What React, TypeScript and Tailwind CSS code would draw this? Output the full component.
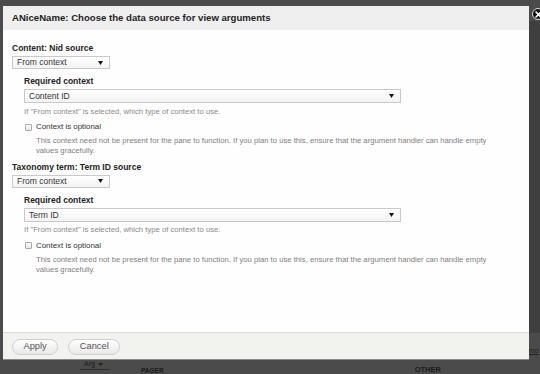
import React from 'react';

function Arrow() {
  return (
    <svg width="5" height="4" viewBox="0 0 5 4" className="shrink-0">
      <polygon points="0,0 5,0 2.5,4" fill="#111" />
    </svg>
  );
}

function Select({ text, className }: { text: string; className: string }) {
  return (
    <div
      className={
        'flex items-center justify-between pl-[4px] pr-[6px] border border-[#c9c9c9] bg-gradient-to-b from-white to-[#f3f3f3] text-[8.5px] text-[#333] ' +
        className
      }
    >
      <span>{text}</span>
      <Arrow />
    </div>
  );
}

function SourceSection({ label, context }: { label: string; context: string }) {
  return (
    <div>
      <div className="h-[10px] leading-[10px] text-[8.5px] font-bold text-[#222]">{label}</div>
      <Select text="From context" className="mt-[3px] w-[98px] h-[13px]" />
      <div className="pl-[12px]">
        <div className="mt-[7px] h-[10px] leading-[10px] text-[8.5px] font-bold text-[#222]">Required context</div>
        <Select text={context} className="mt-[3px] w-[377px] h-[14px]" />
        <div className="mt-[3.5px] h-[9px] leading-[9px] text-[7.7px] text-[#8a8a8a]">
          If "From context" is selected, which type of context to use.
        </div>
        <div className="mt-[6.5px] h-[10px] flex items-center gap-[4px]">
          <div className="ml-[1px] w-[7px] h-[7px] border border-[#a9a9a9] rounded-[1px] bg-gradient-to-b from-white to-[#e6e6e6]" />
          <span className="text-[7.9px] text-[#333] leading-[10px]">Context is optional</span>
        </div>
        <div className="mt-[4.4px] pl-[12px] text-[7.7px] leading-[10px] text-[#808080] whitespace-nowrap">
          This context need not be present for the pane to function. If you plan to use this, ensure that the argument handler can handle empty
          <br />
          values gracefully.
        </div>
      </div>
    </div>
  );
}

export default function App() {
  return (
    <div className="relative w-[540px] h-[374px] overflow-hidden bg-[#4b4b4b] font-['Liberation_Sans',Arial,sans-serif]">
      <div className="flex">
        <div className="w-[3px] shrink-0" />
        <div className="mt-[6px] w-[526px] h-[354px] flex flex-col bg-white border-b border-[#8a8a8a] shrink-0">
          <div className="h-[24px] shrink-0 flex items-center px-[9px] bg-[#efefef]">
            <span className="text-[9.6px] font-bold text-[#1e1e1e]">ANiceName: Choose the data source for view arguments</span>
          </div>
          <div className="flex-1 pt-[13px] px-[9px] bg-[#fefefe]">
            <SourceSection label="Content: Nid source" context="Content ID" />
            <div className="mt-[5.6px]">
              <SourceSection label="Taxonomy term: Term ID source" context="Term ID" />
            </div>
          </div>
          <div className="h-[27px] shrink-0 flex items-start gap-[10px] pt-[6px] px-[9px] border-t border-[#dcdcdc] bg-[#f2f2ef]">
            <button className="h-[16px] px-[10.5px] rounded-[8px] border border-[#cfcfcf] bg-gradient-to-b from-white to-[#e9e9e9] text-[9.3px] text-[#555] leading-none">
              Apply
            </button>
            <button className="h-[16px] px-[10.5px] rounded-[8px] border border-[#cfcfcf] bg-gradient-to-b from-white to-[#e9e9e9] text-[9.3px] text-[#555] leading-none">
              Cancel
            </button>
          </div>
        </div>
        <div className="flex-1 flex flex-col">
          <div className="h-[21px]" />
          <div className="h-[312px] bg-[#3f3f3f]" />
          <div className="h-[27px] text-[7px] text-[#222] pt-[13px] underline">mo</div>
        </div>
      </div>
      <div className="flex items-start h-[14px] text-[#1c1c1c]">
        <div className="ml-[80px] w-[30px] h-[10px] flex items-center gap-[3px] pl-[4px] border-b border-[#2e2e2e] text-[7px]">
          <span>Arg</span>
          <svg width="5" height="3" viewBox="0 0 5 3"><polygon points="0,0 5,0 2.5,3" fill="#222" /></svg>
        </div>
        <div className="ml-[31px] mt-[7px] text-[6.5px] leading-[7px] font-bold">PAGER</div>
        <div className="ml-[251px] mt-[5px] text-[7.5px] leading-[9px] font-bold">OTHER</div>
      </div>
      <div className="absolute top-[8px] left-[532px] w-[12px] h-[12px] rounded-full bg-[#111] border border-[#ddd] flex items-center justify-center">
        <svg width="7" height="7" viewBox="0 0 7 7">
          <path d="M1 1 L6 6 M6 1 L1 6" stroke="#fff" strokeWidth="1.6" strokeLinecap="round" />
        </svg>
      </div>
    </div>
  );
}
